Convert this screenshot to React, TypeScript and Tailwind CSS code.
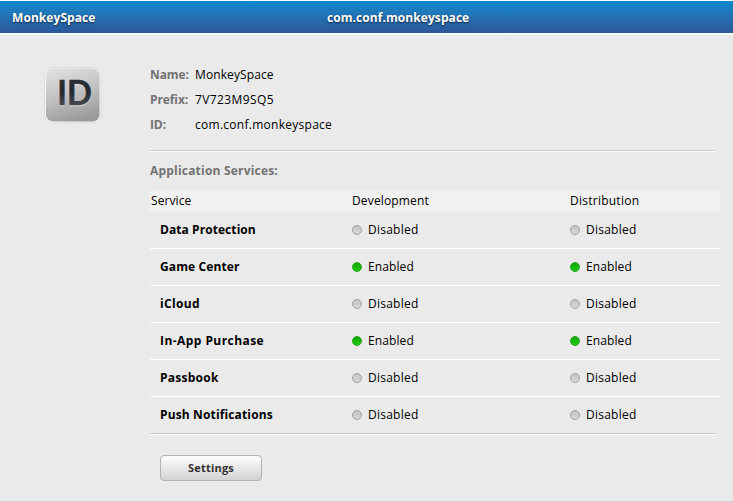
import React from "react";

type Service = { name: string; dev: boolean; dist: boolean; spacing: string };

const services: Service[] = [
  { name: "Data Protection", dev: false, dist: false, spacing: "tracking-[0.07px]" },
  { name: "Game Center", dev: true, dist: true, spacing: "tracking-[0.12px]" },
  { name: "iCloud", dev: false, dist: false, spacing: "tracking-[0.35px]" },
  { name: "In-App Purchase", dev: true, dist: true, spacing: "tracking-[0.44px]" },
  { name: "Passbook", dev: false, dist: false, spacing: "tracking-[0.25px]" },
  { name: "Push Notifications", dev: false, dist: false, spacing: "tracking-[0.14px]" },
];

function Status({ on }: { on: boolean }) {
  return (
    <div className="flex items-center gap-[6px]">
      <span
        className={
          on
            ? "size-[10px] rounded-full border border-[#22a41c] bg-linear-to-b from-[#0fa905] to-[#1ccb0e]"
            : "size-[10px] rounded-full border border-[#a0a0a0] bg-linear-to-b from-[#c4c4c4] to-[#d8d8d8]"
        }
      />
      <span className={on ? "tracking-[0.1px]" : "tracking-[0.25px]"}>{on ? "Enabled" : "Disabled"}</span>
    </div>
  );
}

function Detail({ label, value, spacing }: { label: string; value: string; spacing: string }) {
  return (
    <div className="flex h-[25px] items-center">
      <dt className="w-[45px] font-bold tracking-[-0.1px] text-[#737373]">{label}</dt>
      <dd className={spacing}>{value}</dd>
    </div>
  );
}

function IdIcon() {
  return (
    <svg width="58" height="58" viewBox="0 0 58 58" className="shrink-0">
      <defs>
        <linearGradient id="tile" x1="0.3" y1="0" x2="0.6" y2="1">
          <stop offset="0" stopColor="#dedede" />
          <stop offset="0.5" stopColor="#c0c0c0" />
          <stop offset="1" stopColor="#999" />
        </linearGradient>
        <linearGradient id="ink" x1="0" y1="0" x2="0" y2="1">
          <stop offset="0" stopColor="#30363c" />
          <stop offset="0.5" stopColor="#22282e" />
          <stop offset="1" stopColor="#555a5e" />
        </linearGradient>
      </defs>
      <rect x="0.5" y="0.5" width="56.5" height="55.5" rx="8" fill="#f4f4f4" stroke="#dcdcdc" />
      <rect x="2" y="1.5" width="53.5" height="53" rx="7" fill="url(#tile)" />
      <text x="13.3" y="39.2" fontFamily="Lato, sans-serif" fontWeight="700" fontSize="35" textLength="34.5" lengthAdjust="spacingAndGlyphs" fill="#dedede" stroke="#dedede" strokeWidth="0.6">ID</text>
      <text x="13.3" y="38.2" fontFamily="Lato, sans-serif" fontWeight="700" fontSize="35" textLength="34.5" lengthAdjust="spacingAndGlyphs" fill="url(#ink)" stroke="url(#ink)" strokeWidth="0.6">ID</text>
    </svg>
  );
}

export default function App() {
  return (
    <div className="flex h-[502px] w-[733px] flex-col overflow-hidden border-b border-[#cfcfcf] bg-[#eaeaea] font-['Open_Sans','Noto_Sans',sans-serif] text-[12px] leading-4 text-black">
      <header className="flex h-[35px] shrink-0 items-center border-t border-b-2 border-white bg-linear-to-b from-[#048bce] to-[#2b579a] bg-clip-padding pt-px pl-3 font-bold tracking-[0.07px] text-white [text-shadow:0_1px_2px_rgba(0,0,0,0.65)]">
        <span className="w-[315px]">MonkeySpace</span>
        <span>com.conf.monkeyspace</span>
      </header>
      <main className="flex grow">
        <div className="w-[150px] shrink-0 pt-[32px] pl-[44px]">
          <IdIcon />
        </div>
        <div className="w-[570px] pt-[27px]">
          <dl>
            <Detail label="Name:" value="MonkeySpace" spacing="tracking-[0.1px]" />
            <Detail label="Prefix:" value="7V723M9SQ5" spacing="tracking-[0.4px]" />
            <Detail label="ID:" value="com.conf.monkeyspace" spacing="tracking-[0.27px]" />
          </dl>
          <div className="mt-[13px] h-[2px] w-[565px] border-t border-b border-t-[#c8c8c8] border-b-white" />
          <h2 className="mt-[11px] font-bold tracking-[0.2px] text-[#737373]">Application Services:</h2>
          <div className="mt-[11px] grid h-[22px] grid-cols-[202px_218px_150px] items-center bg-[#f1f1f1]">
            <span className="pl-px tracking-[0.1px]">Service</span>
            <span className="tracking-[0.15px]">Development</span>
            <span className="tracking-[0.25px]">Distribution</span>
          </div>
          {services.map((s, i) => (
            <div
              key={s.name}
              className={
                i < services.length - 1
                  ? "grid h-[37px] grid-cols-[202px_218px_150px] items-center border-b border-white"
                  : "grid h-[36px] grid-cols-[202px_218px_150px] items-center"
              }
            >
              <span className={`pl-[10px] font-bold ${s.spacing}`}>{s.name}</span>
              <Status on={s.dev} />
              <Status on={s.dist} />
            </div>
          ))}
          <div className="h-[2px] w-[565px] border-t border-b border-t-[#c8c8c8] border-b-white" />
          <button className="mt-[20px] ml-[10px] h-[26px] w-[102px] rounded-[4px] border border-[#b2b2b2] bg-linear-to-b from-white to-[#d2d2d2] text-[11px] font-bold tracking-[0.2px] text-[#333]">
            Settings
          </button>
        </div>
      </main>
    </div>
  );
}
